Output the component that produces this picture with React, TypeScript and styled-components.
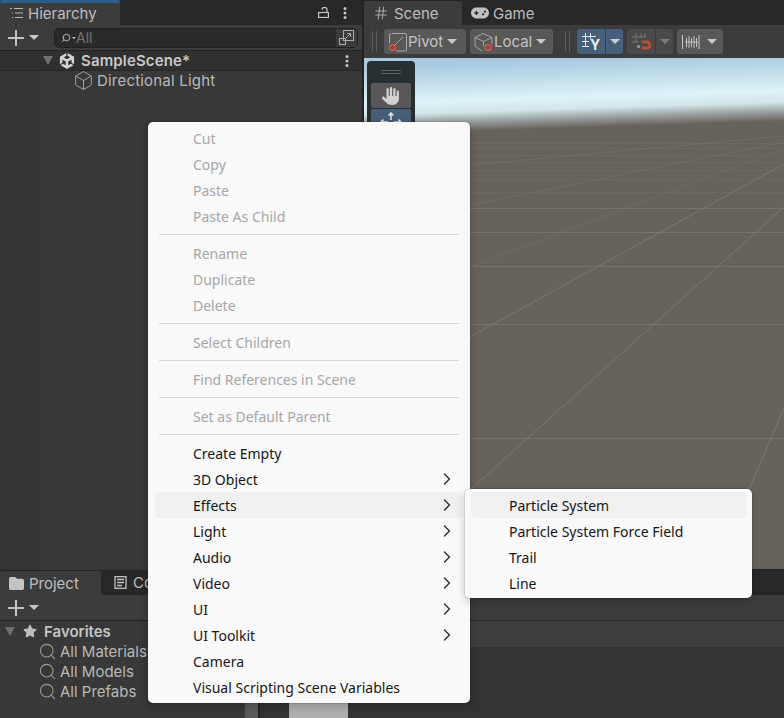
import React from 'react';
import styled, { createGlobalStyle } from 'styled-components';
import { FaFolder, FaGamepad, FaHand, FaStar } from 'react-icons/fa6';
import { SiUnity } from 'react-icons/si';
import { Box, ChevronRight, Hash, Search } from 'lucide-react';

const UNITY_FONT = `Inter, 'Noto Sans', sans-serif`;
const MENU_FONT = `'Noto Sans', 'Open Sans', sans-serif`;

type MenuEntry = { label: string; disabled?: boolean; submenu?: boolean; active?: boolean } | 'sep';

const mainMenu: MenuEntry[] = [
    { label: 'Cut', disabled: true },
    { label: 'Copy', disabled: true },
    { label: 'Paste', disabled: true },
    { label: 'Paste As Child', disabled: true },
    'sep',
    { label: 'Rename', disabled: true },
    { label: 'Duplicate', disabled: true },
    { label: 'Delete', disabled: true },
    'sep',
    { label: 'Select Children', disabled: true },
    'sep',
    { label: 'Find References in Scene', disabled: true },
    'sep',
    { label: 'Set as Default Parent', disabled: true },
    'sep',
    { label: 'Create Empty' },
    { label: '3D Object', submenu: true },
    { label: 'Effects', submenu: true, active: true },
    { label: 'Light', submenu: true },
    { label: 'Audio', submenu: true },
    { label: 'Video', submenu: true },
    { label: 'UI', submenu: true },
    { label: 'UI Toolkit', submenu: true },
    { label: 'Camera' },
    { label: 'Visual Scripting Scene Variables' },
];

const effectsMenu: MenuEntry[] = [
    { label: 'Particle System', active: true },
    { label: 'Particle System Force Field' },
    { label: 'Trail' },
    { label: 'Line' },
];

const MenuItems: React.FC<{ entries: MenuEntry[] }> = ({ entries }) => (
    <>
        {entries.map((entry, index) =>
            entry === 'sep' ? (
                <Separator key={`sep-${index}`} />
            ) : (
                <MenuRow key={entry.label} $disabled={entry.disabled} $active={entry.active}>
                    <span>{entry.label}</span>
                    {entry.submenu && <ChevronRight size={20} strokeWidth={1.7} />}
                </MenuRow>
            ),
        )}
    </>
);

const Kebab = () => (
    <KebabIcon width="4" height="12" viewBox="0 0 4 12">
        <circle cx="2" cy="1.6" r="1.5" />
        <circle cx="2" cy="6" r="1.5" />
        <circle cx="2" cy="10.4" r="1.5" />
    </KebabIcon>
);

const PlusDropdown = () => (
    <PlusWrap>
        <svg width="16" height="16" viewBox="0 0 16 16">
            <path d="M8 0v16M0 8h16" stroke="#c4c4c4" strokeWidth="2" />
        </svg>
        <Caret $size={5} />
    </PlusWrap>
);

const SceneBackdrop = () => {
    const horizontals = [143, 148, 155, 162, 170, 179, 192, 208, 232, 266, 324, 438];
    const diagonals = [
        [470, 490, 784, 207],
        [470, 337, 784, 164],
        [470, 267, 784, 149],
        [470, 205, 784, 142],
        [470, 165, 784, 136],
        [784, 408, 715, 569],
    ];
    return (
        <SceneCanvas viewBox="364 58 420 511" preserveAspectRatio="none">
            <defs>
                <linearGradient
                    id="sky"
                    gradientUnits="userSpaceOnUse"
                    x1="0"
                    y1="58"
                    x2="0"
                    y2="126"
                    gradientTransform="rotate(-1.8 627 124)"
                >
                    <stop offset="0" stopColor="#a9c9e1" />
                    <stop offset="0.55" stopColor="#dcf3f5" />
                    <stop offset="0.72" stopColor="#d3e5e7" />
                    <stop offset="0.82" stopColor="#a7b2b3" />
                    <stop offset="1" stopColor="#68625d" />
                </linearGradient>
            </defs>
            <rect x="364" y="58" width="420" height="511" fill="url(#sky)" />
            {horizontals.map((y) => (
                <line key={y} x1="364" x2="784" y1={y + 0.5} y2={y + 0.5} stroke="#7a7672" strokeOpacity={y < 200 ? 0.35 : 0.9} />
            ))}
            {diagonals.map(([x1, y1, x2, y2]) => (
                <line key={x1 + y1} x1={x1} y1={y1} x2={x2} y2={y2} stroke="#7f7b77" strokeOpacity={y1 < 300 ? 0.4 : 0.85} />
            ))}
        </SceneCanvas>
    );
};

const App: React.FC = () => (
    <Page>
        <GlobalStyle />
        <TopArea>
            <Hierarchy>
                <TabBar>
                    <Tab $width={120} $focused>
                        <svg width="14" height="10" viewBox="0 0 14 10" fill="none" stroke="#b8b8b8">
                            <path d="M1 .5h2M5 .5h9M3 5h1M6 5h8M3 9.5h1M6 9.5h8" />
                        </svg>
                        Hierarchy
                    </Tab>
                    <TabActions>
                        <svg width="11" height="11" viewBox="0 0 11 11" fill="none" stroke="#c4c4c4" strokeWidth="1.2">
                            <path d="M4 2.800a2.500 2.500 0 0 1 5 0V5.500" />
                            <rect x=".6" y="5.500" width="9.800" height="5" />
                        </svg>
                        <Kebab />
                    </TabActions>
                </TabBar>
                <HierarchyToolbar>
                    <PlusDropdown />
                    <SearchField>
                        <SearchLabel>
                            <Search size={10} strokeWidth={2.4} />
                            <Caret $size={2} />
                            <span>All</span>
                        </SearchLabel>
                        <SearchModeButton>
                            <svg width="15" height="15" viewBox="0 0 15 15" fill="none" stroke="#aaa">
                                <rect x="4.500" y=".5" width="10" height="10" />
                                <rect x=".5" y="8.500" width="6" height="6" />
                                <path d="M6 9l5-5M8 3.500h3.500V7" />
                            </svg>
                        </SearchModeButton>
                    </SearchField>
                </HierarchyToolbar>
                <SceneRow>
                    <Disclosure $size={5} />
                    <SiUnity size={16} color="#d4d4d4" />
                    <SceneName>SampleScene*</SceneName>
                    <Kebab />
                </SceneRow>
                <HierarchyBody>
                    <HierarchyItem>
                        <Box size={21} strokeWidth={1.1} color="#a8a8a8" />
                        Directional Light
                    </HierarchyItem>
                </HierarchyBody>
            </Hierarchy>
            <SceneView>
                <SceneTabs>
                    <Tab $width={98}>
                        <Hash size={16} strokeWidth={1.2} color="#c0c0c0" />
                        <TabLabel>Scene</TabLabel>
                    </Tab>
                    <GameTab>
                        <FaGamepad size={18} color="#c0c0c0" />
                        Game
                    </GameTab>
                </SceneTabs>
                <SceneToolbar>
                    <DragHandle />
                    <ToolButton $width={82}>
                        <svg width="20" height="20" viewBox="0 0 20 20" fill="none">
                            <path d="M4 1.500h13.500a1 1 0 0 1 1 1V18a1 1 0 0 1-1 1H8M1.500 11V3A1.500 1.500 0 0 1 3 1.500M7 13l8-8" stroke="#a9a9a9" />
                            <circle cx="4.500" cy="15.500" r="2.800" stroke="#e5582c" strokeWidth="1.400" />
                        </svg>
                        <span>Pivot</span>
                        <Caret $size={5} />
                    </ToolButton>
                    <ToolButton $width={83}>
                        <svg width="20" height="20" viewBox="0 0 20 20" fill="none">
                            <path d="M1 5.500 9 1.500l9 4-8.500 4L1 5.500V14l7 5M9.500 9.500V14M18 5.500V12" stroke="#a9a9a9" />
                            <circle cx="14" cy="15.500" r="2.800" stroke="#e5582c" strokeWidth="1.400" />
                        </svg>
                        <span>Local</span>
                        <Caret $size={5} />
                    </ToolButton>
                    <DragHandle $leading={8} />
                    <SplitButton>
                        <SplitMain $tone="#46607c">
                            <svg width="20" height="20" viewBox="0 0 20 20" fill="none" stroke="#e4e4e4">
                                <path d="M4.500 1v14M9.500 1v6M1 4.500h14M1 9.500h7M1 14.500h7" />
                                <text x="9" y="18" fontSize="14" fontWeight="700" fill="#f0f0f0" stroke="none" fontFamily="Inter, sans-serif">Y</text>
                            </svg>
                        </SplitMain>
                        <SplitCaret $tone="#46607c">
                            <Caret $size={5} />
                        </SplitCaret>
                    </SplitButton>
                    <SplitButton>
                        <SplitMain $tone="#4a4a4a">
                            <svg width="20" height="20" viewBox="0 0 20 20" fill="none" stroke="#787878">
                                <path d="M5 1v9M10 1v5M14 1v4M1 5h14M1 10h6" />
                                <rect x="6" y="13" width="3" height="3" fill="#8a8a8a" stroke="none" />
                                <path d="M11 10h5a2.700 2.700 0 0 1 0 6h-5" stroke="#b0532f" strokeWidth="3" />
                            </svg>
                        </SplitMain>
                        <SplitCaret $tone="#4a4a4a" $dim>
                            <Caret $size={5} />
                        </SplitCaret>
                    </SplitButton>
                    <RulerButton>
                        <svg width="20" height="18" viewBox="0 0 20 18" fill="none" stroke="#c4c4c4">
                            <path d="M1.500 2v14M4 9h13M5.500 5v9M8 3v12M10.500 5v9M13 3v12M15.500 5v9M18 2v14" />
                        </svg>
                        <Caret $size={5} />
                    </RulerButton>
                </SceneToolbar>
                <Viewport>
                    <SceneBackdrop />
                    <ToolsOverlay>
                        <OverlayGrip />
                        <OverlayButton>
                            <FaHand size={18} color="#d2d2d2" />
                        </OverlayButton>
                        <OverlayButton $selected>
                            <svg width="22" height="22" viewBox="0 0 22 22" fill="none" stroke="#e8e8e8" strokeWidth="1.500">
                                <path d="M11 9V2M8.500 4.500 11 2l2.500 2.500M8 11H1M3.500 8.500 1 11l2.500 2.500M14 11h7M18.500 8.500 21 11l-2.500 2.500" />
                            </svg>
                        </OverlayButton>
                    </ToolsOverlay>
                </Viewport>
            </SceneView>
        </TopArea>
        <BottomArea>
            <TabBar>
                <Tab $width={101}>
                    <FaFolder size={15} color="#c4c4c4" />
                    <TabLabel>Project</TabLabel>
                </Tab>
                <ConsoleTab>
                    <svg width="13" height="13" viewBox="0 0 13 13" fill="none" stroke="#c4c4c4" strokeWidth="1.300">
                        <rect x="1" y=".7" width="11" height="11.600" />
                        <path d="M3 3.500h7M3 6.500h7M3 9.500h5" />
                    </svg>
                    Console
                </ConsoleTab>
            </TabBar>
            <ProjectToolbar>
                <PlusDropdown />
            </ProjectToolbar>
            <ProjectBody>
                <ProjectTree>
                    <FavoritesRow>
                        <Disclosure $size={5} />
                        <FaStar size={14} color="#bcbcbc" />
                        <strong>Favorites</strong>
                    </FavoritesRow>
                    {['All Materials', 'All Models', 'All Prefabs'].map((label) => (
                        <FavoriteItem key={label}>
                            <Search size={19} strokeWidth={1.4} color="#9a9a9a" />
                            {label}
                        </FavoriteItem>
                    ))}
                </ProjectTree>
                <TreeScrollbar />
                <ProjectContent>
                    <BreadcrumbBar />
                    <AssetGrid>
                        <AssetThumb />
                    </AssetGrid>
                </ProjectContent>
            </ProjectBody>
        </BottomArea>
        <ContextMenu>
            <MenuItems entries={mainMenu} />
        </ContextMenu>
        <SubMenu>
            <MenuItems entries={effectsMenu} />
        </SubMenu>
    </Page>
);

const GlobalStyle = createGlobalStyle`
    html, body {
        margin: 0;
        padding: 0;
        background: #232323;
    }
`;

const Page = styled.div`
    position: relative;
    width: 784px;
    height: 718px;
    overflow: hidden;
    display: flex;
    flex-direction: column;
    background: #232323;
    font-family: ${UNITY_FONT};
    font-size: 15px;
    color: #bcbcbc;
`;

const TopArea = styled.div`
    display: flex;
    gap: 2px;
    height: 569px;
`;

const Hierarchy = styled.section`
    width: 362px;
    display: flex;
    flex-direction: column;
`;

const TabBar = styled.div`
    display: flex;
    align-items: stretch;
    height: 25px;
    flex: none;
    background: #282828;
`;

const Tab = styled.div<{ $width: number; $focused?: boolean }>`
    width: ${(p) => p.$width}px;
    box-sizing: border-box;
    display: flex;
    align-items: center;
    gap: 5px;
    padding-left: 9px;
    padding-bottom: ${(p) => (p.$focused ? 2 : 0)}px;
    background: #3c3c3c;
    border-top: ${(p) => (p.$focused ? '3px solid #2c5d87' : '1px solid #232323')};
    border-radius: 2px 2px 0 0;
    color: #bdbdbd;
`;

const TabLabel = styled.span`
    margin-left: 0;
`;

const TabActions = styled.div`
    margin-left: auto;
    display: flex;
    align-items: center;
    gap: 14px;
    padding-right: 15px;
`;

const KebabIcon = styled.svg`
    fill: #c4c4c4;
    flex: none;
`;

const HierarchyToolbar = styled.div`
    height: 25px;
    flex: none;
    display: flex;
    align-items: center;
    gap: 15px;
    padding: 0 4px 0 8px;
    background: #3c3c3c;
    border-bottom: 1px solid #232323;
`;

const PlusWrap = styled.div`
    display: flex;
    align-items: center;
    gap: 5px;
`;

const Caret = styled.span<{ $size: number }>`
    display: inline-block;
    flex: none;
    border-left: ${(p) => p.$size}px solid transparent;
    border-right: ${(p) => p.$size}px solid transparent;
    border-top: ${(p) => p.$size}px solid #c8c8c8;
`;

const Disclosure = styled(Caret)`
    border-top-color: #6f6f6f;
    border-top-width: 9px;
`;

const SearchField = styled.div`
    flex: 1;
    height: 20px;
    display: flex;
    align-items: stretch;
    justify-content: space-between;
    box-sizing: border-box;
    background: #2a2a2a;
    border: 1px solid #212121;
    border-radius: 5px;
    overflow: hidden;
`;

const SearchLabel = styled.div`
    display: flex;
    align-items: center;
    gap: 1px;
    padding-left: 6px;
    font-size: 14px;
    color: #777;

    svg {
        color: #b0b0b0;
        transform: scaleX(-1);
    }

    span:last-child {
        margin-left: -1px;
    }
`;

const SearchModeButton = styled.div`
    width: 21px;
    display: flex;
    align-items: center;
    justify-content: center;
    background: #3c3c3c;
`;

const SceneRow = styled.div`
    height: 20px;
    flex: none;
    box-sizing: border-box;
    display: flex;
    align-items: center;
    padding: 0 13px 0 43px;
    background: #303030;
    border-bottom: 1px solid #282828;

    svg:first-of-type {
        margin-left: 6px;
    }
`;

const SceneName = styled.strong`
    flex: 1;
    margin-left: 6px;
    font-weight: 600;
    letter-spacing: 0.15px;
    color: #c8c8c8;
`;

const HierarchyBody = styled.div`
    flex: 1;
    padding-left: 73px;
    background: linear-gradient(to right, #333 40px, #383838 40px);
    margin-bottom: -1px;
`;

const HierarchyItem = styled.div`
    height: 20px;
    margin-top: -1px;
    display: flex;
    align-items: center;
    gap: 3px;
    letter-spacing: 0.2px;
    color: #b8b8b8;
`;

const SceneView = styled.section`
    flex: 1;
    display: flex;
    flex-direction: column;
    min-width: 0;
`;

const SceneTabs = styled(TabBar)``;

const GameTab = styled.div`
    display: flex;
    align-items: center;
    gap: 4px;
    padding: 1px 0 0 9px;
    color: #bdbdbd;
`;

const SceneToolbar = styled.div`
    height: 33px;
    flex: none;
    box-sizing: border-box;
    display: flex;
    align-items: flex-start;
    gap: 4px;
    padding: 4px 0 0 8px;
    background: #3c3c3c;
`;

const DragHandle = styled.div<{ $leading?: number }>`
    width: 5px;
    height: 21px;
    margin: 2px 3px 0 ${(p) => p.$leading ?? 0}px;
    box-sizing: border-box;
    border-left: 1px solid #5c5c5c;
    border-right: 1px solid #5c5c5c;
`;

const ToolButton = styled.div<{ $width: number }>`
    width: ${(p) => p.$width}px;
    height: 25px;
    box-sizing: border-box;
    display: flex;
    align-items: center;
    padding-left: 4px;
    background: #585858;
    border-radius: 3px;
    color: #c4c4c4;

    ${Caret} {
        margin-left: 4px;
    }
`;

const SplitButton = styled.div`
    display: flex;
    gap: 1px;
    height: 25px;
`;

const SplitMain = styled.div<{ $tone: string }>`
    width: 28px;
    display: flex;
    align-items: center;
    justify-content: center;
    background: ${(p) => p.$tone};
    border-radius: 3px 0 0 3px;
`;

const SplitCaret = styled.div<{ $tone: string; $dim?: boolean }>`
    width: 17px;
    display: flex;
    align-items: center;
    justify-content: center;
    background: ${(p) => p.$tone};
    border-radius: 0 3px 3px 0;

    ${Caret} {
        border-top-color: ${(p) => (p.$dim ? '#7c7c7c' : '#c8d0d8')};
    }
`;

const RulerButton = styled.div`
    width: 46px;
    height: 25px;
    box-sizing: border-box;
    display: flex;
    align-items: center;
    gap: 6px;
    padding-left: 4px;
    background: #585858;
    border-radius: 3px;
`;

const Viewport = styled.div`
    position: relative;
    flex: 1;
    min-height: 0;
`;

const SceneCanvas = styled.svg`
    display: block;
    width: 100%;
    height: 100%;
`;

const ToolsOverlay = styled.div`
    position: absolute;
    left: 3px;
    top: 3px;
    width: 48px;
    box-sizing: border-box;
    padding: 0 4px 4px;
    background: #282f33;
    border-radius: 4px;
`;

const OverlayGrip = styled.div`
    height: 4px;
    box-sizing: border-box;
    margin: 9px 10px;
    border-top: 1px solid #5c6164;
    border-bottom: 1px solid #5c6164;
`;

const OverlayButton = styled.div<{ $selected?: boolean }>`
    height: 25px;
    margin-bottom: 1px;
    display: flex;
    align-items: center;
    justify-content: center;
    background: ${(p) => (p.$selected ? '#46607c' : '#585858')};
    border-radius: 2px;
`;

const BottomArea = styled.section`
    flex: 1;
    min-height: 0;
    display: flex;
    flex-direction: column;
    margin-top: 1px;
`;

const ConsoleTab = styled.div`
    display: flex;
    align-items: center;
    gap: 6px;
    padding-left: 13px;
    color: #bdbdbd;
`;

const ProjectToolbar = styled.div`
    height: 25px;
    flex: none;
    display: flex;
    align-items: center;
    padding-left: 8px;
    background: #3c3c3c;
    border-bottom: 1px solid #232323;
`;

const ProjectBody = styled.div`
    flex: 1;
    min-height: 0;
    display: flex;
`;

const ProjectTree = styled.div`
    width: 245px;
    flex: none;
    background: #383838;
`;

const FavoritesRow = styled.div`
    height: 20px;
    display: flex;
    align-items: center;
    gap: 8px;
    padding-left: 5px;

    strong {
        margin-left: -1px;
        font-weight: 600;
        color: #c4c4c4;
    }
`;

const FavoriteItem = styled.div`
    height: 20px;
    display: flex;
    align-items: center;
    gap: 3px;
    padding-left: 38px;
    color: #b8b8b8;
`;

const TreeScrollbar = styled.div`
    width: 13px;
    flex: none;
    margin-right: 2px;
    background: #5a5a5a;
    box-shadow: 2px 0 0 #232323;
`;

const ProjectContent = styled.div`
    flex: 1;
    display: flex;
    flex-direction: column;
    background: #333;
`;

const BreadcrumbBar = styled.div`
    height: 26px;
    flex: none;
    background: #3e3e3e;
`;

const AssetGrid = styled.div`
    flex: 1;
    display: flex;
    align-items: flex-end;
    padding-left: 29px;
`;

const AssetThumb = styled.div`
    width: 59px;
    height: 30px;
    background: #b0b0b0;
`;

const ContextMenu = styled.div`
    position: absolute;
    left: 148px;
    top: 122px;
    width: 322px;
    height: 581px;
    box-sizing: border-box;
    padding: 3px 7px;
    background: #f9f9f9;
    border-radius: 5px;
    box-shadow: 0 0 0 1px rgba(0, 0, 0, 0.08), 0 3px 10px rgba(0, 0, 0, 0.22);
`;

const SubMenu = styled.div`
    position: absolute;
    left: 465px;
    top: 489px;
    width: 287px;
    height: 109px;
    box-sizing: border-box;
    padding: 3px 6px;
    background: #f9f9f9;
    border-radius: 5px;
    box-shadow: 0 0 0 1px rgba(0, 0, 0, 0.08), 0 3px 10px rgba(0, 0, 0, 0.22);
`;

const MenuRow = styled.div<{ $disabled?: boolean; $active?: boolean }>`
    height: 26px;
    display: flex;
    align-items: center;
    justify-content: space-between;
    padding: 0 6px 0 38px;
    border-radius: 4px;
    background: ${(p) => (p.$active ? '#f0f0f0' : 'transparent')};
    color: ${(p) => (p.$disabled ? '#a6a6a6' : '#161616')};
    font-family: ${MENU_FONT};
    font-size: 14px;
    white-space: nowrap;

    svg {
        color: #333;
    }
`;

const Separator = styled.div`
    height: 1px;
    margin: 5px 4px;
    background: #d8d8d8;
`;

export default App;
